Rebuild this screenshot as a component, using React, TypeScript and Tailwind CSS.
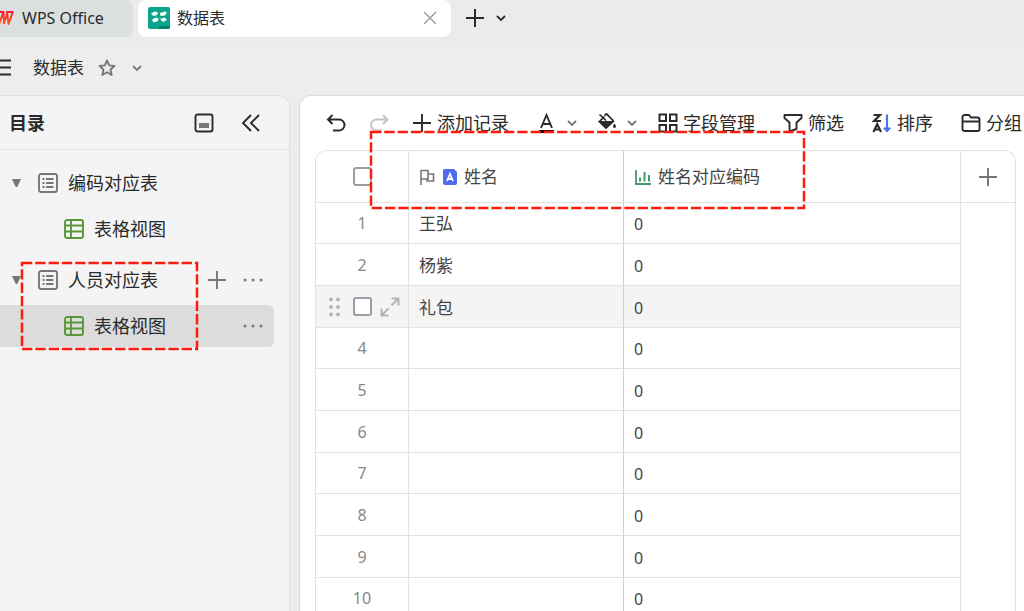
import type { ReactNode } from "react";

const RECORDS = [
  { id: 1, name: "王弘", code: 0 },
  { id: 2, name: "杨紫", code: 0 },
  { id: 3, name: "礼包", code: 0 },
  { id: 4, name: "", code: 0 },
  { id: 5, name: "", code: 0 },
  { id: 6, name: "", code: 0 },
  { id: 7, name: "", code: 0 },
  { id: 8, name: "", code: 0 },
  { id: 9, name: "", code: 0 },
  { id: 10, name: "", code: 0 },
];

const HOVERED_ID = 3;

const SHEETS = [
  { name: "编码对应表", view: "表格视图", active: false },
  { name: "人员对应表", view: "表格视图", active: true },
];

type IconProps = { className?: string; children: ReactNode };

function Icon({ className = "", children }: IconProps) {
  return (
    <svg
      viewBox="0 0 20 20"
      fill="none"
      stroke="currentColor"
      strokeWidth="1.9"
      aria-hidden="true"
      className={`h-5 w-5 shrink-0 ${className}`}
    >
      {children}
    </svg>
  );
}

function Chevron({ className = "" }: { className?: string }) {
  return (
    <svg viewBox="0 0 12 12" fill="none" stroke="currentColor" strokeWidth="1.8" aria-hidden="true" className={`h-3 w-3 shrink-0 ${className}`}>
      <path d="M2 4l4 4 4-4" />
    </svg>
  );
}

function Plus({ className = "" }: { className?: string }) {
  return (
    <Icon className={className}>
      <path d="M10 1v18M1 10h18" />
    </Icon>
  );
}

function Dots() {
  return (
    <Icon className="text-[#777]">
      <g fill="currentColor" stroke="none">
        <circle cx="2" cy="10" r="1.5" />
        <circle cx="10" cy="10" r="1.5" />
        <circle cx="18" cy="10" r="1.5" />
      </g>
    </Icon>
  );
}

function TabBar() {
  return (
    <div className="flex h-[42px] items-start bg-[#e9ebed]">
      <button className="flex h-[37px] w-[133px] shrink-0 items-center gap-2 rounded-r-lg bg-[#dcdfe0] pb-px text-base">
        <svg viewBox="0 0 14 18" fill="none" aria-hidden="true" className="h-[18px] w-3.5">
          <defs>
            <linearGradient id="logo" x1="0" y1="0" x2="0" y2="18" gradientUnits="userSpaceOnUse">
              <stop offset="0.2" stopColor="#f5222d" />
              <stop offset="1" stopColor="#ff6a1a" />
            </linearGradient>
          </defs>
          <path d="M-3 3h6M-1 15L3.500 3l.5 12M3.500 15L7.500 4M6 3h6.800L8.500 15 7.300 5" stroke="url(#logo)" strokeWidth="2" strokeLinejoin="round" />
        </svg>
        WPS Office
      </button>
      <div className="ml-[5px] flex h-[37px] w-[313px] items-center rounded-lg bg-white pr-[13px] pb-px pl-2.5">
        <svg viewBox="0 0 22 22" aria-hidden="true" className="h-[22px] w-[22px]">
          <rect width="22" height="22" rx="2" fill="#08a58c" />
          <path d="M11 19h11v1a2 2 0 0 1-2 2h-9z" fill="#047f6e" />
          <g fill="#fff">
            <path d="M3 6.500L7 4.500 10 5.500 9 8 5.500 9zM12 6l5-1.500 2 1L17 8.500l-4.500.5zM4 12.500l4-2 2.500 1L10 14l-4.500 1.500zM12 12l4.500-1.500 2.500 2.500-4 2z" />
          </g>
        </svg>
        <span className="ml-[7px] text-base">数据表</span>
        <button aria-label="关闭标签" className="ml-auto text-[#999]">
          <svg viewBox="0 0 16 16" fill="none" stroke="currentColor" strokeWidth="1.400" className="h-4 w-4">
            <path d="M2 2l12 12M14 2L2 14" />
          </svg>
        </button>
      </div>
      <div className="flex h-9 items-center gap-2.5 pl-3.5">
        <button aria-label="新建标签">
          <Plus className="stroke-2" />
        </button>
        <button aria-label="标签列表">
          <Chevron />
        </button>
      </div>
    </div>
  );
}

function DocumentBar() {
  return (
    <div className="flex h-[53px] items-center pb-0.5">
      <button aria-label="菜单">
        <svg viewBox="0 0 12 20" stroke="currentColor" strokeWidth="1.900" aria-hidden="true" className="h-5 w-3">
          <path d="M0 2.500h11M0 9.500h11M0 16.500h11" />
        </svg>
      </button>
      <h1 className="ml-[21px] text-[17px]">数据表</h1>
      <button aria-label="收藏" className="ml-[13px] text-[#777]">
        <Icon>
          <path d="M10 2.500l2.200 4.900 5.200.6-3.900 3.600 1.100 5.400-4.600-2.700L5.400 17l1.100-5.400L2.600 8l5.200-.6z" strokeLinejoin="round" />
        </Icon>
      </button>
      <button aria-label="更多操作" className="ml-3.5 text-[#777]">
        <Chevron />
      </button>
    </div>
  );
}

function Sidebar() {
  return (
    <aside className="w-[290px] shrink-0 rounded-tr-xl border-t border-r border-[#e0e0e0] bg-[#f4f4f4]">
      <div className="flex h-[54px] items-center border-b border-[#e3e3e3] pr-7 pl-[9px]">
        <h2 className="text-lg font-bold">目录</h2>
        <button aria-label="底部面板" className="ml-auto">
          <Icon>
            <rect x="1.500" y="1.500" width="17" height="17" rx="2" />
            <rect x="5" y="10" width="10" height="5" fill="#777" stroke="none" />
          </Icon>
        </button>
        <button aria-label="收起目录" className="ml-[27px]">
          <Icon>
            <path d="M10 2L2 10l8 8M18 2l-8 8 8 8" />
          </Icon>
        </button>
      </div>
      <nav className="flex flex-col gap-1.5 pt-[9px] pr-[15px]">
        {SHEETS.map((sheet) => (
          <div key={sheet.name} className="flex flex-col gap-px text-lg">
            <div className="flex h-12 items-center pr-[11px] pl-[11px]">
              <button aria-label="展开" className="text-[#777]">
                <svg viewBox="0 0 11 10" fill="currentColor" className="h-2.5 w-[11px]">
                  <path d="M1 1h9L6.500 8.500q-1 1.500-2 0z" />
                </svg>
              </button>
              <a href="#sheet" className="ml-4 flex items-center gap-2.5">
                <Icon className="text-[#777]">
                  <rect x="1" y="1" width="18" height="18" rx="2" />
                  <path d="M4.500 6h2M4.500 10h2M4.500 14h2M8 6h7.500M8 10h7.500M8 14h7.500" />
                </Icon>
                {sheet.name}
              </a>
              {sheet.active && (
                <div className="ml-auto flex gap-4 text-[#777]">
                  <button aria-label="新建视图">
                    <Plus />
                  </button>
                  <button aria-label="数据表操作">
                    <Dots />
                  </button>
                </div>
              )}
            </div>
            <div className={`flex h-[42px] items-center rounded-r-md pr-[11px] pl-16 ${sheet.active ? "bg-[#dcdcdc]" : ""}`}>
              <a href="#view" className="flex items-center gap-2.5">
                <Icon className="text-[#5a9638]">
                  <rect x="1" y="1" width="18" height="18" rx="2" />
                  <path d="M1 6.500h18M1 12.500h18M7 1v18" />
                </Icon>
                {sheet.view}
              </a>
              {sheet.active && (
                <button aria-label="视图操作" className="ml-auto">
                  <Dots />
                </button>
              )}
            </div>
          </div>
        ))}
      </nav>
    </aside>
  );
}

function ToolButton({ icon, label }: { icon: ReactNode; label: string }) {
  return (
    <button className="flex shrink-0 items-center gap-[5px] whitespace-nowrap">
      {icon}
      {label}
    </button>
  );
}

function Toolbar() {
  return (
    <div className="flex h-[54px] items-center gap-7 pl-[26px] text-lg">
      <div className="flex items-center gap-[23px]">
        <button aria-label="撤销">
          <Icon className="stroke-2">
            <path d="M6.500 2L2 6.500 6.500 11M2 6.500h11a5.500 5.500 0 0 1 0 11H7" />
          </Icon>
        </button>
        <button aria-label="重做" disabled className="text-[#c4c4c4]">
          <Icon>
            <path d="M14 2l4.500 4.500L14 11M18.500 6.500H7.500a5.500 5.500 0 0 0 0 11H13" />
          </Icon>
        </button>
        <ToolButton icon={<Plus />} label="添加记录" />
      </div>
      <div className="ml-px flex items-center gap-5">
        <button aria-label="字体颜色" className="flex items-center gap-2">
          <Icon>
            <path d="M3 15L8.500 2 14 15M5 11h7" />
            <path d="M1 18.500h15" stroke="#111" strokeWidth="3" />
          </Icon>
          <Chevron className="text-[#777]" />
        </button>
        <button aria-label="填充颜色" className="flex items-center gap-2">
          <Icon>
            <path d="M6.500 2.500L8.500 .8 15 7.500 8 14.500 1.500 8.500l5-5M1.500 1.500L8 7.500" strokeWidth="1.700" />
            <path d="M2 9h12.500L8 15z" fill="currentColor" />
            <path d="M16.500 10.500q3 4 0 4.500-3-.5 0-4.500z" fill="currentColor" stroke="none" />
          </Icon>
          <Chevron className="text-[#777]" />
        </button>
        <ToolButton
          label="字段管理"
          icon={
            <Icon className="stroke-2">
              <rect x="1.500" y="1.500" width="6.500" height="6.500" />
              <rect x="12" y="1.500" width="6.500" height="6.500" />
              <rect x="1.500" y="12" width="6.500" height="6.500" />
              <rect x="12" y="12" width="6.500" height="6.500" />
            </Icon>
          }
        />
      </div>
      <ToolButton
        label="筛选"
        icon={
          <Icon>
            <path d="M1.500 2h17v3l-5 4.500v6.500l-7 2.500v-9L1.500 5z" strokeLinejoin="round" />
          </Icon>
        }
      />
      <ToolButton
        label="排序"
        icon={
          <Icon>
            <path d="M1.500 2H8L2 8h7M1.500 19l3.700-8L9 19M3 16.500h4.500" strokeWidth="2.200" />
            <path d="M15 1.500v15" stroke="#4a74e8" strokeWidth="2.200" />
            <path d="M11.500 15h7L15 19z" fill="#4a74e8" stroke="#4a74e8" strokeWidth="1" />
          </Icon>
        }
      />
      <ToolButton
        label="分组"
        icon={
          <Icon>
            <path d="M1.500 16V4a2 2 0 0 1 2-2H8l2 2.500h6.500a2 2 0 0 1 2 2V16a2 2 0 0 1-2 2h-13a2 2 0 0 1-2-2zM1.500 8.500h17" />
          </Icon>
        }
      />
    </div>
  );
}

function RowCheckbox({ label }: { label: string }) {
  return (
    <input
      type="checkbox"
      aria-label={label}
      className="block h-[19px] w-[19px] shrink-0 appearance-none rounded-[3px] border-2 border-[#9a9ea6] bg-white"
    />
  );
}

function DataGrid() {
  return (
    <div className="mr-2 ml-[15px] overflow-hidden rounded-t-xl border border-b-0 border-[#e2e2e2]">
      <table className="w-full table-fixed border-separate border-spacing-0 text-left text-[17px] text-[#444]">
        <colgroup>
          <col className="w-[93px]" />
          <col className="w-[215px]" />
          <col />
          <col className="w-[54px]" />
        </colgroup>
        <thead>
          <tr className="h-[52px]">
            <th className="border-r border-b border-[#e2e2e2] p-0">
              <div className="flex justify-center">
                <RowCheckbox label="全选" />
              </div>
            </th>
            <th className="border-r border-b border-[#e2e2e2] border-r-[#cfd0d3] py-0 pr-0 pl-2.5 font-normal">
              <div className="flex items-center">
                <svg viewBox="0 0 16 16" fill="none" stroke="#777" strokeWidth="1.600" aria-hidden="true" className="h-4 w-4">
                  <path d="M2 16V1.500h7V10H2M9 5h5.500v7H8v-2" />
                </svg>
                <svg viewBox="0 0 14 16" aria-hidden="true" className="ml-2 h-4 w-3.5">
                  <path d="M2 0h9l3 3v11a2 2 0 0 1-2 2H2a2 2 0 0 1-2-2V2a2 2 0 0 1 2-2z" fill="#4f6bf0" />
                  <path d="M4 12l3-7L10 12M5 10h4" fill="none" stroke="#fff" strokeWidth="1.800" />
                </svg>
                <span className="ml-[7px]">姓名</span>
              </div>
            </th>
            <th className="border-r border-b border-[#e2e2e2] py-0 pr-0 pl-[11px] font-normal">
              <div className="flex items-center gap-[7px]">
                <svg viewBox="0 0 16 16" fill="none" stroke="#459a6c" strokeWidth="1.800" aria-hidden="true" className="h-4 w-4">
                  <path d="M1 1v14h15" />
                  <path d="M5 8.500v4M9.500 3v9.500M14 6v6.500" strokeWidth="2" />
                </svg>
                姓名对应编码
              </div>
            </th>
            <th className="border-b border-[#e2e2e2] p-0">
              <button aria-label="添加字段" className="flex w-full justify-center text-[#777]">
                <Plus />
              </button>
            </th>
          </tr>
        </thead>
        <tbody>
          {RECORDS.map((record) => {
            const hovered = record.id === HOVERED_ID;
            return (
              <tr key={record.id} className="h-[42px] nth-[3n+1]:h-[41px]">
                <td className={`border-r border-b border-[#e2e2e2] p-0 text-center text-base text-[#888] ${hovered ? "bg-[#f4f4f5]" : ""}`}>
                  {hovered ? (
                    <div className="flex items-center justify-center gap-2">
                      <svg viewBox="0 0 20 20" fill="#b4b4b4" aria-hidden="true" className="h-5 w-5">
                        <circle cx="6" cy="2.500" r="2" />
                        <circle cx="13" cy="2.500" r="2" />
                        <circle cx="6" cy="10" r="2" />
                        <circle cx="13" cy="10" r="2" />
                        <circle cx="6" cy="17.500" r="2" />
                        <circle cx="13" cy="17.500" r="2" />
                      </svg>
                      <RowCheckbox label="选择记录" />
                      <button aria-label="展开记录" className="text-[#b4b4b4]">
                        <Icon>
                          <path d="M11.500 1.500h7v7M18.500 1.500l-7 7M8.500 18.500h-7v-7M1.500 18.500l7-7" />
                        </Icon>
                      </button>
                    </div>
                  ) : (
                    record.id
                  )}
                </td>
                <td className={`border-r border-b border-[#e2e2e2] border-r-[#cfd0d3] pt-0.5 pr-0 pb-0 pl-2.5 ${hovered ? "bg-[#f4f4f5]" : ""}`}>
                  {record.name}
                </td>
                <td className={`border-r border-b border-[#e2e2e2] pt-0.5 pr-0 pb-0 pl-2.5 text-base ${hovered ? "bg-[#f4f4f5]" : ""}`}>
                  {record.code}
                </td>
                <td className="p-0" />
              </tr>
            );
          })}
        </tbody>
      </table>
    </div>
  );
}

function Highlight({ className }: { className: string }) {
  return (
    <svg aria-hidden="true" className={`pointer-events-none absolute overflow-visible ${className}`}>
      <rect width="100%" height="100%" fill="none" stroke="#ff1a0e" strokeWidth="2.500" strokeDasharray="10.300 3" />
    </svg>
  );
}

export default function App() {
  return (
    <div className="relative flex h-screen flex-col overflow-hidden bg-[#ededed] font-['Noto_Sans','Noto_Sans_CJK_SC',sans-serif] text-[#2b2b2b]">
      <TabBar />
      <DocumentBar />
      <div className="flex min-h-0 flex-1">
        <Sidebar />
        <main className="ml-[9px] min-w-0 flex-1 overflow-hidden rounded-tl-xl border-t border-l border-[#dcdcdc] bg-white">
          <Toolbar />
          <DataGrid />
        </main>
      </div>
      <Highlight className="top-[263px] left-[22px] h-[86px] w-[175px]" />
      <Highlight className="top-[132px] left-[371px] h-[76px] w-[433px]" />
    </div>
  );
}
